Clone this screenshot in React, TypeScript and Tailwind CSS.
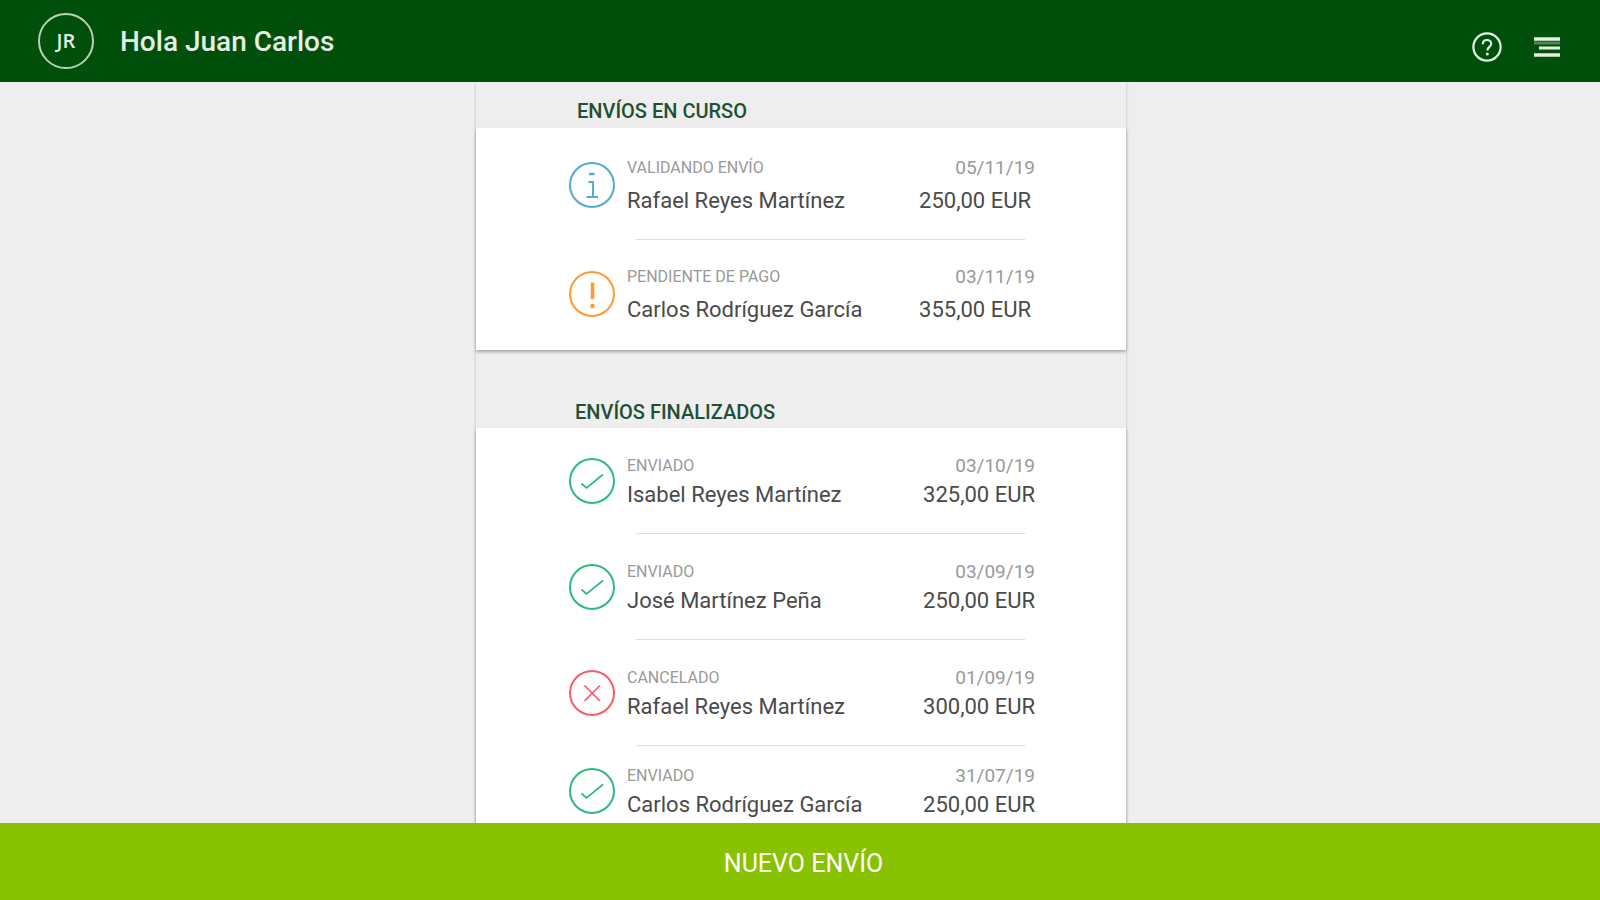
import { Fragment } from "react";

type Status = "info" | "warning" | "done" | "cancelled";

interface Transfer {
  status: Status;
  label: string;
  name: string;
  date: string;
  amount: string;
}

const ongoing: Transfer[] = [
  { status: "info", label: "VALIDANDO ENVÍO", name: "Rafael Reyes Martínez", date: "05/11/19", amount: "250,00 EUR" },
  { status: "warning", label: "PENDIENTE DE PAGO", name: "Carlos Rodríguez García", date: "03/11/19", amount: "355,00 EUR" },
];

const finished: Transfer[] = [
  { status: "done", label: "ENVIADO", name: "Isabel Reyes Martínez", date: "03/10/19", amount: "325,00 EUR" },
  { status: "done", label: "ENVIADO", name: "José Martínez Peña", date: "03/09/19", amount: "250,00 EUR" },
  { status: "cancelled", label: "CANCELADO", name: "Rafael Reyes Martínez", date: "01/09/19", amount: "300,00 EUR" },
  { status: "done", label: "ENVIADO", name: "Carlos Rodríguez García", date: "31/07/19", amount: "250,00 EUR" },
];

const statusColor: Record<Status, string> = {
  info: "text-[#4fadcb]",
  warning: "text-[#ff9a2e]",
  done: "text-[#2dba7d]",
  cancelled: "text-[#fb5a66]",
};

function StatusIcon({ status }: { status: Status }) {
  return (
    <svg
      viewBox="0 0 46 46"
      className={`size-[46px] shrink-0 ${statusColor[status]}`}
      fill="none"
      stroke="currentColor"
      strokeWidth="2"
      aria-hidden="true"
    >
      <circle cx="23" cy="23" r="22" />
      {status === "info" && (
        <>
          <path d="M19.5 20H24V34.5M17.5 35H29" strokeWidth="1.9" />
          <path d="M20 12H25.5" strokeWidth="2.4" />
        </>
      )}
      {status === "warning" && (
        <>
          <path d="M23.5 11.5V28" strokeWidth="3.6" />
          <circle cx="23.5" cy="35" r="2.3" fill="currentColor" stroke="none" />
        </>
      )}
      {status === "done" && <path d="M12.5 25.5L17.5 29.8L34 16.5" strokeWidth="1.7" />}
      {status === "cancelled" && <path d="M15.5 15.5L31 31M31 15.5L15.5 31" strokeWidth="1.7" />}
    </svg>
  );
}

function TransferRow({ transfer, className, loose }: { transfer: Transfer; className: string; loose?: boolean }) {
  return (
    <li className={`flex items-center gap-3 pr-[91px] pl-[93px] ${className}`}>
      <StatusIcon status={transfer.status} />
      <div className={`flex min-w-0 flex-1 flex-col ${loose ? "gap-1" : "gap-0"}`}>
        <div className="flex justify-between text-[#999999]">
          <span className="text-[16px] leading-7">{transfer.label}</span>
          <span className="text-[19px] leading-7">{transfer.date}</span>
        </div>
        <div className={`flex justify-between text-[22px] leading-[30px] text-[#4a4a4a] ${loose ? "pr-1" : ""}`}>
          <span>{transfer.name}</span>
          <span>{transfer.amount}</span>
        </div>
      </div>
    </li>
  );
}

function Divider() {
  return <li role="separator" className="mr-[101px] ml-[160px] h-px bg-[#dddddd]" />;
}

export default function App() {
  return (
    <div className="flex h-screen flex-col bg-[#eeeeee] font-['Roboto',sans-serif]">
      <header className="flex h-[82px] shrink-0 items-center bg-[#00500b] pr-10 pl-[38px] text-[#e6efe4]">
        <div className="flex size-14 items-center justify-center rounded-full border-2 border-[#b9cfb6] font-['Open_Sans',sans-serif] text-[20px] font-semibold">
          JR
        </div>
        <h1 className="ml-[26px] pt-0.5 text-[28px] leading-9 font-medium">Hola Juan Carlos</h1>
        <div className="ml-auto flex items-center gap-8 pt-3">
          <button type="button" aria-label="Ayuda" className="cursor-pointer">
            <svg viewBox="0 0 30 30" className="size-[30px]" fill="none" stroke="currentColor" aria-hidden="true">
              <circle cx="15" cy="15" r="13.6" strokeWidth="2.2" />
              <path d="M10.8 12.2C10.8 9.6 12.6 8 15 8S19.2 9.6 19.2 11.8C19.2 14.8 15.3 15 15.3 18.6" strokeWidth="2.2" />
              <circle cx="15.3" cy="22" r="1.5" fill="currentColor" stroke="none" />
            </svg>
          </button>
          <button type="button" aria-label="Menú" className="cursor-pointer">
            <svg viewBox="0 0 26 20" className="h-5 w-[26px]" fill="none" stroke="currentColor" aria-hidden="true">
              <path d="M0 2H26M0 18H26" strokeWidth="3.4" />
              <path d="M0 6H26" strokeWidth="3" opacity="0.35" />
              <path d="M5 11H26" strokeWidth="3" />
            </svg>
          </button>
        </div>
      </header>

      <main className="min-h-0 flex-1 overflow-y-auto pl-0.5 [scrollbar-width:none]">
        <div className="mx-auto w-full max-w-[650px] shadow-[0_0_3px_rgba(0,0,0,0.22)]">
          <section>
            <h2 className="px-[101px] pt-[15px] pb-[3px] text-[20px] leading-7 font-medium text-[#1f5035]">ENVÍOS EN CURSO</h2>
            <ul className="bg-white pt-[3px] pb-[2px] shadow-[0_2px_3px_rgba(0,0,0,0.3)]">
              {ongoing.map((t, i) => (
                <Fragment key={t.date}>
                  {i > 0 && <Divider />}
                  <TransferRow transfer={t} className="py-[23px]" loose />
                </Fragment>
              ))}
            </ul>
          </section>
          <section>
            <h2 className="px-[99px] pt-[48px] pb-[2px] text-[20px] leading-7 font-medium text-[#1f5035]">ENVÍOS FINALIZADOS</h2>
            <ul className="bg-white shadow-[0_2px_3px_rgba(0,0,0,0.3)]">
              {finished.map((t, i) => (
                <Fragment key={t.date}>
                  {i > 0 && <Divider />}
                  <TransferRow transfer={t} className={i === finished.length - 1 ? "pt-4 pb-6" : "pt-6 pb-[23px]"} />
                </Fragment>
              ))}
            </ul>
          </section>
        </div>
      </main>

      <button
        type="button"
        className="h-[77px] shrink-0 cursor-pointer bg-[#88c100] pt-1 pl-[7px] text-[25px] text-white"
      >
        NUEVO ENVÍO
      </button>
    </div>
  );
}
